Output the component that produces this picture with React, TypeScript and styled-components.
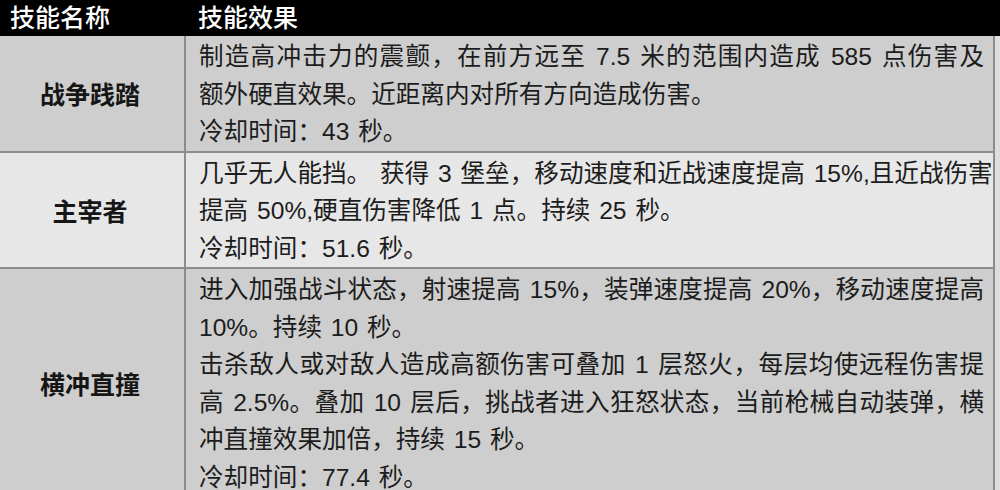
import React from 'react';
import styled, { createGlobalStyle } from 'styled-components';

interface Skill {
  name: string;
  lines: { text: string; full?: boolean }[];
  shade: 'dark' | 'light';
}

const skills: Skill[] = [
  {
    name: '战争践踏',
    shade: 'dark',
    lines: [
      { text: '制造高冲击力的震颤，在前方远至 7.5 米的范围内造成 585 点伤害及', full: true },
      { text: '额外硬直效果。近距离内对所有方向造成伤害。' },
      { text: '冷却时间：43 秒。' },
    ],
  },
  {
    name: '主宰者',
    shade: 'light',
    lines: [
      { text: '几乎无人能挡。 获得 3 堡垒，移动速度和近战速度提高 15%,且近战伤害', full: true },
      { text: '提高 50%,硬直伤害降低 1 点。持续 25 秒。' },
      { text: '冷却时间：51.6 秒。' },
    ],
  },
  {
    name: '横冲直撞',
    shade: 'dark',
    lines: [
      { text: '进入加强战斗状态，射速提高 15%，装弹速度提高 20%，移动速度提高', full: true },
      { text: '10%。持续 10 秒。' },
      { text: '击杀敌人或对敌人造成高额伤害可叠加 1 层怒火，每层均使远程伤害提', full: true },
      { text: '高 2.5%。叠加 10 层后，挑战者进入狂怒状态，当前枪械自动装弹，横', full: true },
      { text: '冲直撞效果加倍，持续 15 秒。' },
      { text: '冷却时间：77.4 秒。' },
    ],
  },
];

const App = () => {
  return (
    <>
      <GlobalStyle />
      <Page>
        <HeaderRow>
          <HeaderCell>技能名称</HeaderCell>
          <HeaderCell>技能效果</HeaderCell>
        </HeaderRow>
        {skills.map((skill) => (
          <Row key={skill.name} $shade={skill.shade}>
            <NameCell>{skill.name}</NameCell>
            <EffectCell>
              {skill.lines.map((line, i) => (
                <Line key={i} $full={line.full}>
                  {line.text}
                </Line>
              ))}
            </EffectCell>
          </Row>
        ))}
      </Page>
    </>
  );
};

export default App;

const GlobalStyle = createGlobalStyle`
  * {
    margin: 0;
    padding: 0;
    box-sizing: border-box;
  }
  html, body {
    width: 1000px;
    height: 490px;
    overflow: hidden;
  }
  body {
    font-family: 'Liberation Sans', 'Noto Sans CJK SC', sans-serif;
    background-color: #dedede;
    color: #1c1c1c;
  }
`;

const Page = styled.div`
  width: 1000px;
  display: flex;
  flex-direction: column;
`;

const HeaderRow = styled.div`
  display: grid;
  grid-template-columns: 186px 1fr;
  height: 36px;
  background: #000;
  color: #fff;
  align-items: center;
`;

const HeaderCell = styled.div`
  font-size: 25px;
  font-weight: 500;
  padding-left: 12px;
  line-height: 36px;
  &:first-child {
    padding-left: 10px;
  }
`;

const Row = styled.div<{ $shade: 'dark' | 'light' }>`
  display: grid;
  grid-template-columns: 186px 1fr;
  width: 995px;
  background: ${(p) => (p.$shade === 'dark' ? '#cecece' : '#e7e7e7')};
  border-bottom: 2px solid #8c8c8c;
  border-right: 2px solid #8c8c8c;
`;

const NameCell = styled.div`
  display: flex;
  align-items: center;
  justify-content: center;
  font-size: 25px;
  font-weight: bold;
  color: #161616;
  border-right: 2px solid #8c8c8c;
  padding-right: 4px;
`;

const EffectCell = styled.div`
  padding: 2px 9px 0 13px;
  font-size: 24.6px;
  line-height: 37.5px;
`;

const Line = styled.div<{ $full?: boolean }>`
  white-space: pre;
  text-align: ${(p) => (p.$full ? 'justify' : 'left')};
  text-align-last: ${(p) => (p.$full ? 'justify' : 'auto')};
  word-spacing: 2px;
`;
